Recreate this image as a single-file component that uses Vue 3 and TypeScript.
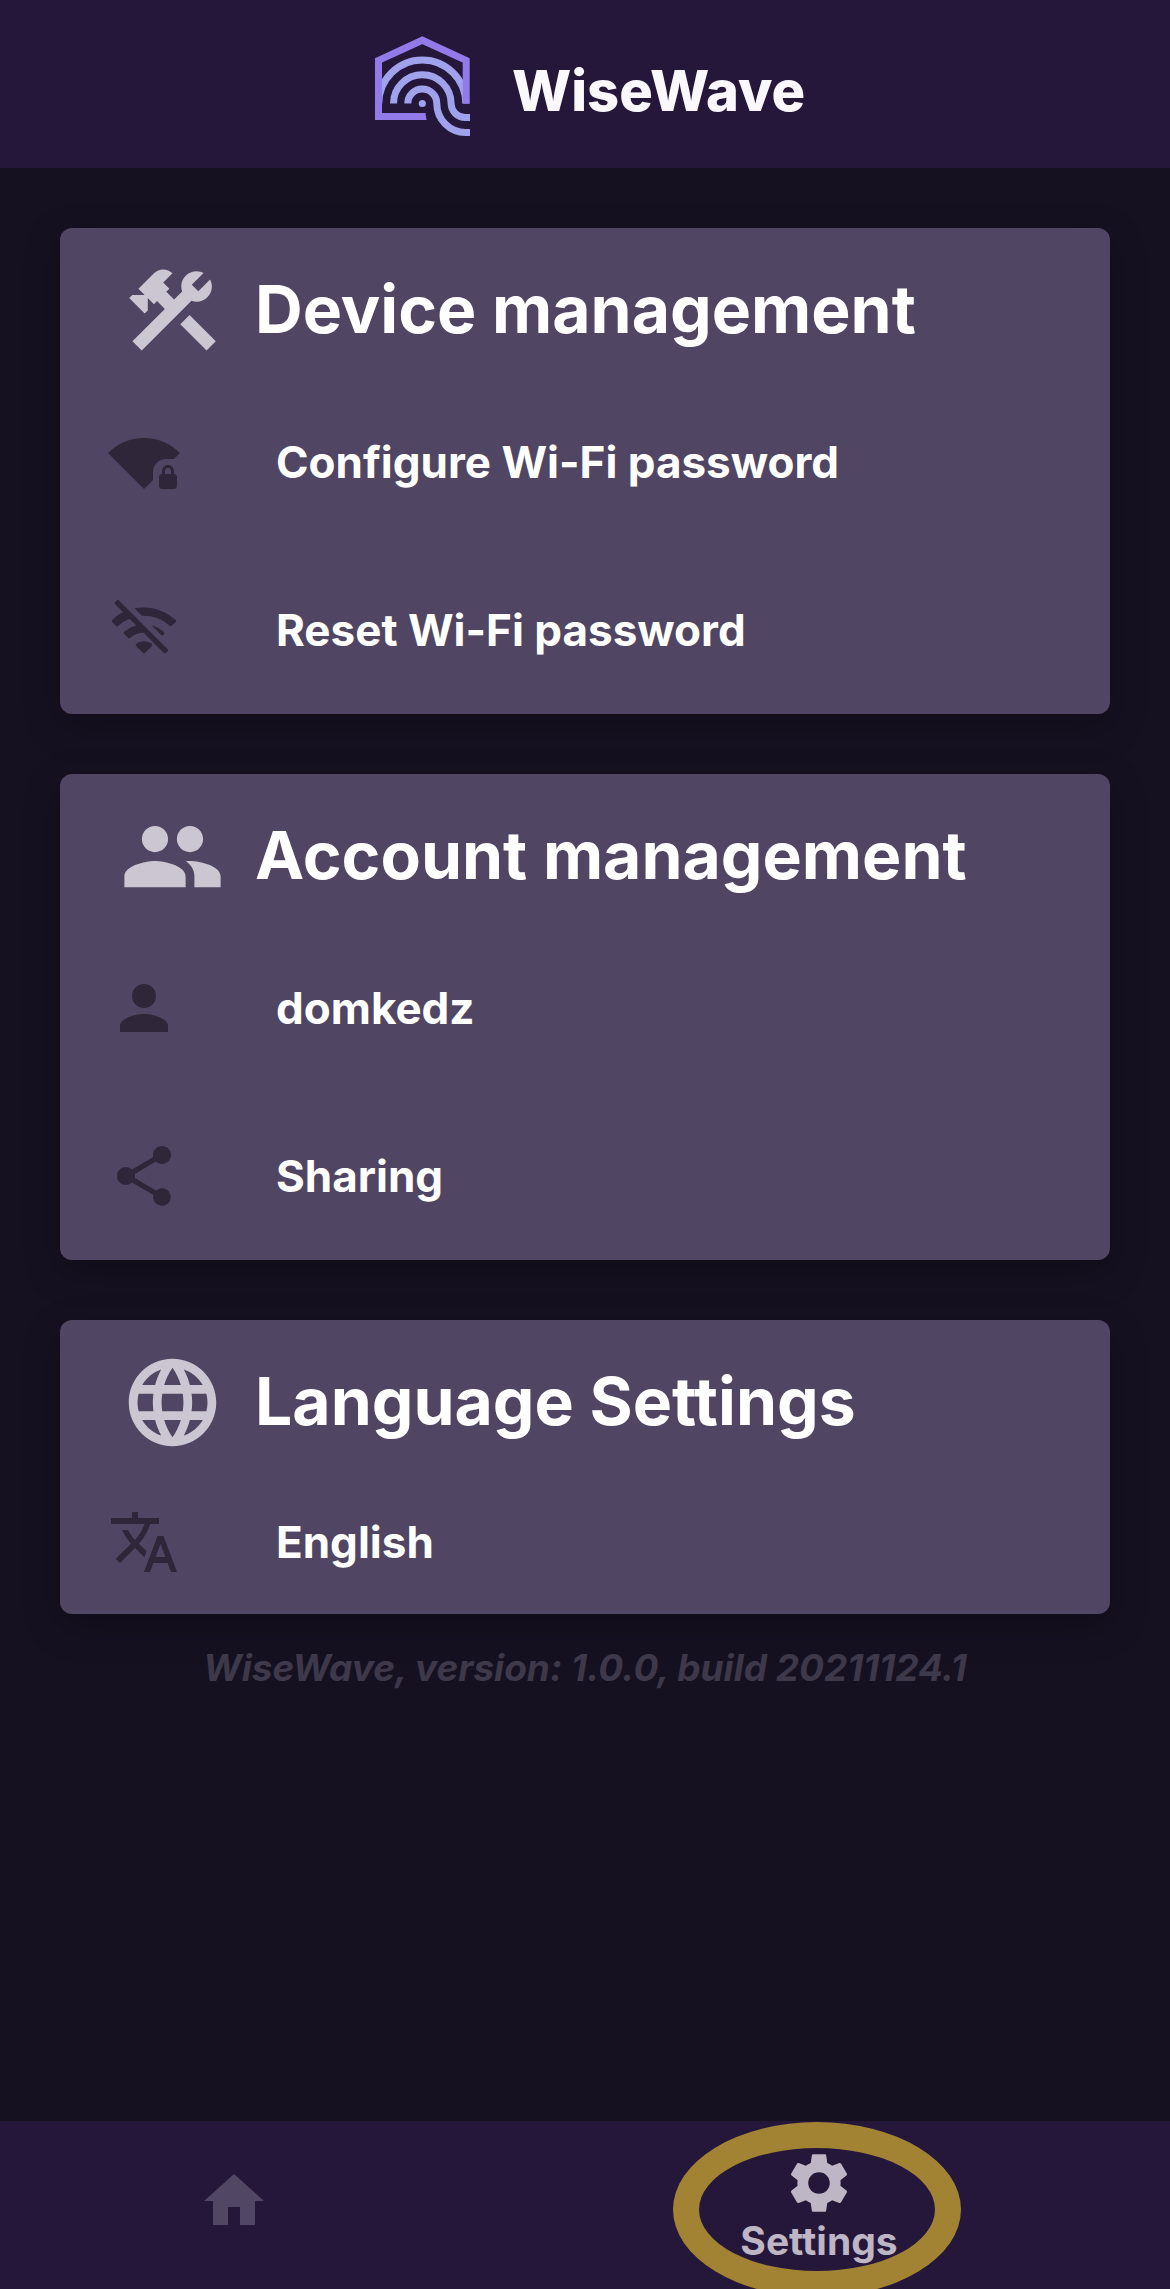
<script setup lang="ts">
interface Row {
  label: string
  icon: string[]
}

interface Section {
  title: string
  icon: string[]
  compact?: boolean
  rows: Row[]
}

const sections: Section[] = [
  {
    title: 'Device management',
    icon: [
      'M13.78 15.17l2.12-2.12 6 6-2.12 2.12z',
      'M17.5 10c1.93 0 3.5-1.57 3.5-3.5 0-.58-.16-1.12-.41-1.6l-2.7 2.7-1.49-1.49 2.7-2.7c-.48-.25-1.02-.41-1.6-.41C15.57 3 14 4.57 14 6.5c0 .41.08.8.21 1.16l-1.85 1.85-1.78-1.78.71-.71-1.41-1.41L12 3.49c-1.17-1.17-3.07-1.17-4.24 0L4.22 7.03l1.41 1.41H2.81l-.71.71 3.54 3.54.71-.71V9.15l1.41 1.41.71-.71 1.78 1.78-7.41 7.41 2.12 2.12L16.34 9.79c.36.13.75.21 1.16.21z',
    ],
    rows: [
      {
        label: 'Configure Wi-Fi password',
        icon: [
          'M24 8.98C20.93 5.9 16.69 4 12 4S3.07 5.9 0 8.98L12 21l3-3.01V15.4c0-2.43 1.97-4.4 4.4-4.4h2.58L24 8.98z',
          'M22 16v-1c0-1.1-.9-2-2-2s-2 .9-2 2v1c-.55 0-1 .45-1 1v3c0 .55.45 1 1 1h4c.55 0 1-.45 1-1v-3c0-.55-.45-1-1-1zm-1 0h-2v-1c0-.55.45-1 1-1s1 .45 1 1v1z',
        ],
      },
      {
        label: 'Reset Wi-Fi password',
        icon: [
          'M22.6 8.7C18.8 5.1 13.6 3.8 8.84 4.78l2.52 2.52c3.3-.16 6.65.94 9.24 3.34.2.19.5.18.7-.02l1.3-1.3c.18-.18.18-.45 0-.62z',
          'M18.6 12.65c-1.2-1.07-2.6-1.81-4.1-2.21l3.2 3.2c.2.2.5.2.7 0l.22-.28c.18-.2.18-.52-.02-.71z',
          'M2.35 2.7c-.2.2-.2.5 0 .7L5.07 6.1C3.75 6.74 2.5 7.6 1.4 8.65c-.2.19-.2.5 0 .7l1.25 1.28c.2.2.5.2.7.02 1.15-1.05 2.45-1.86 3.84-2.42l2.24 2.24c-1.45.38-2.83 1.09-4 2.14-.2.18-.22.5-.02.7l1.25 1.3c.2.2.5.2.7.02 1.32-1.12 2.93-1.67 4.55-1.69l6.7 6.7c.2.2.5.2.7 0l.6-.55c.2-.2.2-.5 0-.7L3.65 2.15c-.2-.2-.5-.2-.7 0z',
          'M9.4 16.65c-.22.18-.22.5-.02.7l2.27 2.3c.2.2.5.2.7 0l2.27-2.3c.2-.2.2-.52-.02-.7-1.5-1.2-3.7-1.2-5.2 0z',
        ],
      },
    ],
  },
  {
    title: 'Account management',
    icon: [
      'M16 11c1.66 0 3-1.34 3-3s-1.34-3-3-3-3 1.34-3 3 1.34 3 3 3zm-8 0c1.66 0 3-1.34 3-3S9.66 5 8 5 5 6.34 5 8s1.34 3 3 3zm0 2c-2.33 0-7 1.17-7 3.5V19h14v-2.5c0-2.33-4.67-3.5-7-3.5zm8 0c-.29 0-.62.02-.97.05 1.16.84 1.97 1.97 1.97 3.45V19h6v-2.5c0-2.33-4.67-3.5-7-3.5z',
    ],
    rows: [
      {
        label: 'domkedz',
        icon: [
          'M12 12c2.21 0 4-1.79 4-4s-1.79-4-4-4-4 1.79-4 4 1.79 4 4 4zm0 2c-2.67 0-8 1.34-8 4v2h16v-2c0-2.66-5.33-4-8-4z',
        ],
      },
      {
        label: 'Sharing',
        icon: [
          'M18 16.08c-.76 0-1.44.3-1.96.77L8.91 12.7c.05-.23.09-.46.09-.7s-.04-.47-.09-.7l7.05-4.11c.54.5 1.25.81 2.04.81 1.66 0 3-1.34 3-3s-1.34-3-3-3-3 1.34-3 3c0 .24.04.47.09.7L8.04 9.81C7.5 9.31 6.79 9 6 9c-1.66 0-3 1.34-3 3s1.34 3 3 3c.79 0 1.5-.31 2.04-.81l7.12 4.16c-.05.21-.08.43-.08.65 0 1.61 1.31 2.92 2.92 2.92s2.92-1.31 2.92-2.92-1.31-2.92-2.92-2.92z',
        ],
      },
    ],
  },
  {
    title: 'Language Settings',
    compact: true,
    icon: [
      'M11.99 2C6.47 2 2 6.48 2 12s4.47 10 9.99 10C17.52 22 22 17.52 22 12S17.52 2 11.99 2zm6.93 6h-2.95c-.32-1.25-.78-2.45-1.38-3.56 1.84.63 3.37 1.91 4.33 3.56zM12 4.04c.83 1.2 1.48 2.53 1.91 3.96h-3.82c.43-1.43 1.08-2.76 1.91-3.96zM4.26 14C4.1 13.36 4 12.69 4 12s.1-1.36.26-2h3.38c-.08.66-.14 1.32-.14 2s.06 1.34.14 2H4.26zm.82 2h2.95c.32 1.25.78 2.45 1.38 3.56-1.84-.63-3.37-1.9-4.33-3.56zm2.95-8H5.08c.96-1.66 2.49-2.93 4.33-3.56C8.81 5.55 8.35 6.75 8.03 8zM12 19.96c-.83-1.2-1.48-2.53-1.91-3.96h3.82c-.43 1.43-1.08 2.76-1.91 3.96zM14.34 14H9.66c-.09-.66-.16-1.32-.16-2s.07-1.35.16-2h4.68c.09.65.16 1.32.16 2s-.07 1.34-.16 2zm.25 5.56c.6-1.11 1.06-2.31 1.38-3.56h2.95c-.96 1.65-2.49 2.93-4.33 3.56zM16.36 14c.08-.66.14-1.32.14-2s-.06-1.34-.14-2h3.38c.16.64.26 1.31.26 2s-.1 1.36-.26 2h-3.38z',
    ],
    rows: [
      {
        label: 'English',
        icon: [
          'M12.87 15.07l-2.54-2.51.03-.03c1.74-1.94 2.98-4.17 3.71-6.53H17V4h-7V2H8v2H1v1.99h11.17C11.5 7.92 10.44 9.75 9 11.35 8.07 10.32 7.3 9.19 6.69 8h-2c.73 1.63 1.73 3.17 2.98 4.56l-5.09 5.02L4 19l5-5 3.11 3.11.76-2.04zM18.5 10h-2L12 22h2l1.12-3h4.75L21 22h2l-4.5-12zm-2.62 7l1.62-4.33L19.12 17h-3.24z',
        ],
      },
    ],
  },
]
</script>

<template>
  <div class="page">
    <header class="topbar">
      <svg class="logo" viewBox="6 6 95 101" fill="none" aria-hidden="true">
        <g stroke="#a0a2ec" stroke-width="7">
          <path d="M9.8 73.5a43.5 43.5 0 0 1 87 0" />
          <path d="M24.5 73.5a28.8 28.8 0 0 1 57.6 0A14.2 14.2 0 0 0 96.3 87.5H101" />
          <path d="M38.8 73.5a14.5 14.5 0 0 1 29 0A29 29 0 0 0 96.8 102.5H101" />
        </g>
        <circle cx="53.3" cy="73.5" r="3.6" fill="#a0a2ec" />
        <path d="M97.2 73.7V30.4L53.3 10.2 9.5 30.4V86.4H56.5" stroke="#927ae8" stroke-width="7" />
        <path d="M56 82.9l1.7 7h-1.7z" fill="#927ae8" />
      </svg>
      <span class="brand">WiseWave</span>
    </header>

    <main class="content">
      <section v-for="section in sections" :key="section.title" class="card" :class="{ compact: section.compact }">
        <div class="card-head">
          <svg class="head-icon" viewBox="0 0 24 24" aria-hidden="true">
            <path v-for="d in section.icon" :key="d" :d="d" />
          </svg>
          <h2>{{ section.title }}</h2>
        </div>
        <button v-for="row in section.rows" :key="row.label" type="button" class="row">
          <svg class="row-icon" viewBox="0 0 24 24" aria-hidden="true">
            <path v-for="d in row.icon" :key="d" :d="d" />
          </svg>
          <span>{{ row.label }}</span>
        </button>
      </section>
      <p class="version">WiseWave, version: 1.0.0, build 20211124.1</p>
    </main>

    <nav class="bottom">
      <a class="tab home" href="#home" aria-label="Home">
        <svg class="row-icon" viewBox="0 0 24 24" aria-hidden="true">
          <path d="M10 20v-6h4v6h5v-8h3L12 3 2 12h3v8z" />
        </svg>
      </a>
      <a class="tab active" href="#settings" aria-current="page">
        <span class="ring"></span>
        <svg class="row-icon" viewBox="0 0 24 24" aria-hidden="true">
          <path
            d="M19.14 12.94c.04-.3.06-.61.06-.94 0-.32-.02-.64-.07-.94l2.03-1.58c.18-.14.23-.41.12-.61l-1.92-3.32c-.12-.22-.37-.29-.59-.22l-2.39.96c-.5-.38-1.03-.7-1.62-.94l-.36-2.54c-.04-.24-.24-.41-.48-.41h-3.84c-.24 0-.43.17-.47.41l-.36 2.54c-.59.24-1.13.57-1.62.94l-2.39-.96c-.22-.08-.47 0-.59.22L2.74 8.87c-.12.21-.08.47.12.61l2.03 1.58c-.05.3-.09.63-.09.94s.02.64.07.94l-2.03 1.58c-.18.14-.23.41-.12.61l1.92 3.32c.12.22.37.29.59.22l2.39-.96c.5.38 1.03.7 1.62.94l.36 2.54c.05.24.24.41.48.41h3.84c.24 0 .44-.17.47-.41l.36-2.54c.59-.24 1.13-.56 1.62-.94l2.39.96c.22.08.47 0 .59-.22l1.92-3.32c.12-.22.07-.47-.12-.61l-2.01-1.58zM12 15.6c-1.98 0-3.6-1.62-3.6-3.6s1.62-3.6 3.6-3.6 3.6 1.62 3.6 3.6-1.62 3.6-3.6 3.6z"
          />
        </svg>
        <span class="tab-label">Settings</span>
      </a>
    </nav>
  </div>
</template>

<style>
body {
  background: #161121;
}
</style>

<style scoped>
.page {
  display: flex;
  flex-direction: column;
  min-height: 100vh;
  background: #161121;
  font-family: Inter, 'Open Sans', sans-serif;
  font-weight: 700;
  color: #fff;
}

svg {
  flex: none;
  display: block;
}

.topbar {
  display: flex;
  align-items: center;
  justify-content: center;
  gap: 42px;
  height: 168px;
  padding: 4px 0 0 10px;
  box-sizing: border-box;
  background: #25173a;
}

.logo {
  width: 95px;
  height: 101px;
}

.brand {
  padding-top: 10px;
  font-size: 56px;
  font-weight: 800;
  line-height: 72px;
  color: #faf8fc;
}

.content {
  flex: 1;
  display: flex;
  flex-direction: column;
  gap: 60px;
  padding: 60px;
}

.card {
  padding-top: 30px;
  border-radius: 12px;
  background: #504562;
  box-shadow: 0 12px 36px rgba(0, 0, 0, 0.3);
}

.card-head {
  display: flex;
  align-items: center;
  gap: 30px;
  height: 105px;
  margin-bottom: 15px;
  padding: 0 60px;
}

.head-icon {
  width: 105px;
  height: 105px;
  fill: #cbc6d1;
}

h2 {
  margin: 0;
  padding-bottom: 4px;
  font-size: 66px;
  font-weight: 700;
  line-height: 80px;
  white-space: nowrap;
}

.row {
  display: flex;
  align-items: center;
  gap: 96px;
  width: 100%;
  height: 168px;
  padding: 0 48px;
  border: 0;
  background: none;
  color: inherit;
  font: inherit;
  font-size: 44px;
  line-height: 56px;
  text-align: left;
  cursor: pointer;
}

.compact .row {
  height: 144px;
}

.row-icon {
  width: 72px;
  height: 72px;
  fill: #2f2639;
}

.version {
  margin: -28px 0 0;
  font-size: 37px;
  font-style: italic;
  line-height: 44px;
  text-align: center;
  color: #3d394a;
}

.bottom {
  display: grid;
  grid-template-columns: 2fr 3fr;
  height: 168px;
  overflow: hidden;
  background: #25173a;
}

.tab {
  position: relative;
  display: flex;
  flex-direction: column;
  align-items: center;
  color: #beb6c5;
  text-decoration: none;
}

.home {
  padding-top: 44px;
}

.home .row-icon {
  fill: #514664;
}

.active {
  padding-top: 26px;
}

.active .row-icon,
.tab-label {
  position: relative;
  fill: #beb6c5;
}

.tab-label {
  font-size: 39px;
  line-height: 44px;
}

.ring {
  position: absolute;
  top: 1px;
  left: 50%;
  width: 288px;
  height: 175px;
  box-sizing: border-box;
  margin-left: -146px;
  border: 26px solid #a18333;
  border-radius: 50%;
}
</style>
